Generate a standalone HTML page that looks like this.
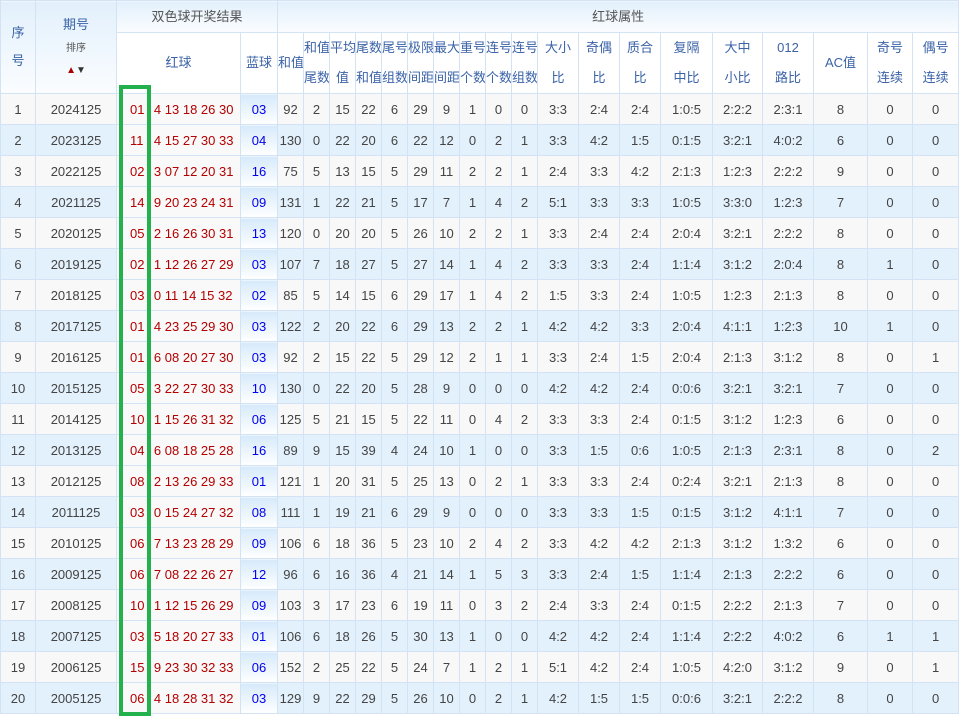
<!DOCTYPE html>
<html><head><meta charset="utf-8"><style>
body{margin:0;background:#fff;font-family:"Liberation Sans","Noto Sans CJK SC",sans-serif;}
table{position:absolute;left:0;top:0;border-collapse:collapse;table-layout:fixed;width:958px;font-size:13px;}
td,th{border:1px solid #d3e3f3;text-align:center;padding:0;overflow:hidden;white-space:nowrap;}
th{font-weight:normal;color:#3b63a8;background:#fff;line-height:30px;font-size:13px;}
.g{background:linear-gradient(#e2f0fc,#fbfdff);}
.t{color:#555;}
tbody tr{height:31px;}
tbody td{color:#444;}
tbody tr:nth-child(odd){background:#f8f8f8;}
tbody tr:nth-child(even){background:#e3f1fc;}
td.r{background:#f9f9f9;position:relative;text-align:left;color:#b30000;}
td.r b{font-weight:normal;position:absolute;left:13px;top:8px;}
td.r i{font-style:normal;position:absolute;left:37px;right:0;top:8px;overflow:hidden;}
td.r i span{display:inline-block;margin-left:-7.3px;}
td.b{background:linear-gradient(#d6eafb,#ffffff);color:#0000ee;}
#box{position:absolute;left:119px;top:85px;width:24px;height:623px;border:4px solid #22b14c;}
</style></head><body>
<table>
<colgroup><col style="width:35px"><col style="width:81px"><col style="width:124px"><col style="width:37px"><col style="width:26px"><col style="width:26px"><col style="width:26px"><col style="width:26px"><col style="width:26px"><col style="width:26px"><col style="width:26px"><col style="width:26px"><col style="width:26px"><col style="width:26px"><col style="width:41px"><col style="width:41px"><col style="width:41px"><col style="width:52px"><col style="width:50px"><col style="width:51px"><col style="width:54px"><col style="width:45px"><col style="width:46px"></colgroup>
<thead>
<tr style="height:32px"><th rowspan="2" class="g" style="line-height:28px">序<br>号</th><th rowspan="2" class="g" style="line-height:22px">期号<br><span style="font-size:10px;color:#555;line-height:12px">排序<br><span style="color:#a00">▲</span><span style="color:#333">▼</span></span></th><th colspan="2" class="g t">双色球开奖结果</th><th colspan="19" class="g t">红球属性</th></tr>
<tr style="height:61px"><th>红球</th><th>蓝球</th><th>和值</th><th>和值<br>尾数</th><th>平均<br>值</th><th>尾数<br>和值</th><th>尾号<br>组数</th><th>极限<br>间距</th><th>最大<br>间距</th><th>重号<br>个数</th><th>连号<br>个数</th><th>连号<br>组数</th><th>大小<br>比</th><th>奇偶<br>比</th><th>质合<br>比</th><th>复隔<br>中比</th><th>大中<br>小比</th><th>012<br>路比</th><th>AC值</th><th>奇号<br>连续</th><th>偶号<br>连续</th></tr>
</thead>
<tbody>
<tr><td>1</td><td>2024125</td><td class="r"><b>01</b><i><span>04 13 18 26 30</span></i></td><td class="b">03</td><td>92</td><td>2</td><td>15</td><td>22</td><td>6</td><td>29</td><td>9</td><td>1</td><td>0</td><td>0</td><td>3:3</td><td>2:4</td><td>2:4</td><td>1:0:5</td><td>2:2:2</td><td>2:3:1</td><td>8</td><td>0</td><td>0</td></tr>
<tr><td>2</td><td>2023125</td><td class="r"><b>11</b><i><span>04 15 27 30 33</span></i></td><td class="b">04</td><td>130</td><td>0</td><td>22</td><td>20</td><td>6</td><td>22</td><td>12</td><td>0</td><td>2</td><td>1</td><td>3:3</td><td>4:2</td><td>1:5</td><td>0:1:5</td><td>3:2:1</td><td>4:0:2</td><td>6</td><td>0</td><td>0</td></tr>
<tr><td>3</td><td>2022125</td><td class="r"><b>02</b><i><span>03 07 12 20 31</span></i></td><td class="b">16</td><td>75</td><td>5</td><td>13</td><td>15</td><td>5</td><td>29</td><td>11</td><td>2</td><td>2</td><td>1</td><td>2:4</td><td>3:3</td><td>4:2</td><td>2:1:3</td><td>1:2:3</td><td>2:2:2</td><td>9</td><td>0</td><td>0</td></tr>
<tr><td>4</td><td>2021125</td><td class="r"><b>14</b><i><span>09 20 23 24 31</span></i></td><td class="b">09</td><td>131</td><td>1</td><td>22</td><td>21</td><td>5</td><td>17</td><td>7</td><td>1</td><td>4</td><td>2</td><td>5:1</td><td>3:3</td><td>3:3</td><td>1:0:5</td><td>3:3:0</td><td>1:2:3</td><td>7</td><td>0</td><td>0</td></tr>
<tr><td>5</td><td>2020125</td><td class="r"><b>05</b><i><span>02 16 26 30 31</span></i></td><td class="b">13</td><td>120</td><td>0</td><td>20</td><td>20</td><td>5</td><td>26</td><td>10</td><td>2</td><td>2</td><td>1</td><td>3:3</td><td>2:4</td><td>2:4</td><td>2:0:4</td><td>3:2:1</td><td>2:2:2</td><td>8</td><td>0</td><td>0</td></tr>
<tr><td>6</td><td>2019125</td><td class="r"><b>02</b><i><span>01 12 26 27 29</span></i></td><td class="b">03</td><td>107</td><td>7</td><td>18</td><td>27</td><td>5</td><td>27</td><td>14</td><td>1</td><td>4</td><td>2</td><td>3:3</td><td>3:3</td><td>2:4</td><td>1:1:4</td><td>3:1:2</td><td>2:0:4</td><td>8</td><td>1</td><td>0</td></tr>
<tr><td>7</td><td>2018125</td><td class="r"><b>03</b><i><span>10 11 14 15 32</span></i></td><td class="b">02</td><td>85</td><td>5</td><td>14</td><td>15</td><td>6</td><td>29</td><td>17</td><td>1</td><td>4</td><td>2</td><td>1:5</td><td>3:3</td><td>2:4</td><td>1:0:5</td><td>1:2:3</td><td>2:1:3</td><td>8</td><td>0</td><td>0</td></tr>
<tr><td>8</td><td>2017125</td><td class="r"><b>01</b><i><span>04 23 25 29 30</span></i></td><td class="b">03</td><td>122</td><td>2</td><td>20</td><td>22</td><td>6</td><td>29</td><td>13</td><td>2</td><td>2</td><td>1</td><td>4:2</td><td>4:2</td><td>3:3</td><td>2:0:4</td><td>4:1:1</td><td>1:2:3</td><td>10</td><td>1</td><td>0</td></tr>
<tr><td>9</td><td>2016125</td><td class="r"><b>01</b><i><span>06 08 20 27 30</span></i></td><td class="b">03</td><td>92</td><td>2</td><td>15</td><td>22</td><td>5</td><td>29</td><td>12</td><td>2</td><td>1</td><td>1</td><td>3:3</td><td>2:4</td><td>1:5</td><td>2:0:4</td><td>2:1:3</td><td>3:1:2</td><td>8</td><td>0</td><td>1</td></tr>
<tr><td>10</td><td>2015125</td><td class="r"><b>05</b><i><span>03 22 27 30 33</span></i></td><td class="b">10</td><td>130</td><td>0</td><td>22</td><td>20</td><td>5</td><td>28</td><td>9</td><td>0</td><td>0</td><td>0</td><td>4:2</td><td>4:2</td><td>2:4</td><td>0:0:6</td><td>3:2:1</td><td>3:2:1</td><td>7</td><td>0</td><td>0</td></tr>
<tr><td>11</td><td>2014125</td><td class="r"><b>10</b><i><span>01 15 26 31 32</span></i></td><td class="b">06</td><td>125</td><td>5</td><td>21</td><td>15</td><td>5</td><td>22</td><td>11</td><td>0</td><td>4</td><td>2</td><td>3:3</td><td>3:3</td><td>2:4</td><td>0:1:5</td><td>3:1:2</td><td>1:2:3</td><td>6</td><td>0</td><td>0</td></tr>
<tr><td>12</td><td>2013125</td><td class="r"><b>04</b><i><span>06 08 18 25 28</span></i></td><td class="b">16</td><td>89</td><td>9</td><td>15</td><td>39</td><td>4</td><td>24</td><td>10</td><td>1</td><td>0</td><td>0</td><td>3:3</td><td>1:5</td><td>0:6</td><td>1:0:5</td><td>2:1:3</td><td>2:3:1</td><td>8</td><td>0</td><td>2</td></tr>
<tr><td>13</td><td>2012125</td><td class="r"><b>08</b><i><span>02 13 26 29 33</span></i></td><td class="b">01</td><td>121</td><td>1</td><td>20</td><td>31</td><td>5</td><td>25</td><td>13</td><td>0</td><td>2</td><td>1</td><td>3:3</td><td>3:3</td><td>2:4</td><td>0:2:4</td><td>3:2:1</td><td>2:1:3</td><td>8</td><td>0</td><td>0</td></tr>
<tr><td>14</td><td>2011125</td><td class="r"><b>03</b><i><span>10 15 24 27 32</span></i></td><td class="b">08</td><td>111</td><td>1</td><td>19</td><td>21</td><td>6</td><td>29</td><td>9</td><td>0</td><td>0</td><td>0</td><td>3:3</td><td>3:3</td><td>1:5</td><td>0:1:5</td><td>3:1:2</td><td>4:1:1</td><td>7</td><td>0</td><td>0</td></tr>
<tr><td>15</td><td>2010125</td><td class="r"><b>06</b><i><span>07 13 23 28 29</span></i></td><td class="b">09</td><td>106</td><td>6</td><td>18</td><td>36</td><td>5</td><td>23</td><td>10</td><td>2</td><td>4</td><td>2</td><td>3:3</td><td>4:2</td><td>4:2</td><td>2:1:3</td><td>3:1:2</td><td>1:3:2</td><td>6</td><td>0</td><td>0</td></tr>
<tr><td>16</td><td>2009125</td><td class="r"><b>06</b><i><span>07 08 22 26 27</span></i></td><td class="b">12</td><td>96</td><td>6</td><td>16</td><td>36</td><td>4</td><td>21</td><td>14</td><td>1</td><td>5</td><td>3</td><td>3:3</td><td>2:4</td><td>1:5</td><td>1:1:4</td><td>2:1:3</td><td>2:2:2</td><td>6</td><td>0</td><td>0</td></tr>
<tr><td>17</td><td>2008125</td><td class="r"><b>10</b><i><span>01 12 15 26 29</span></i></td><td class="b">09</td><td>103</td><td>3</td><td>17</td><td>23</td><td>6</td><td>19</td><td>11</td><td>0</td><td>3</td><td>2</td><td>2:4</td><td>3:3</td><td>2:4</td><td>0:1:5</td><td>2:2:2</td><td>2:1:3</td><td>7</td><td>0</td><td>0</td></tr>
<tr><td>18</td><td>2007125</td><td class="r"><b>03</b><i><span>05 18 20 27 33</span></i></td><td class="b">01</td><td>106</td><td>6</td><td>18</td><td>26</td><td>5</td><td>30</td><td>13</td><td>1</td><td>0</td><td>0</td><td>4:2</td><td>4:2</td><td>2:4</td><td>1:1:4</td><td>2:2:2</td><td>4:0:2</td><td>6</td><td>1</td><td>1</td></tr>
<tr><td>19</td><td>2006125</td><td class="r"><b>15</b><i><span>09 23 30 32 33</span></i></td><td class="b">06</td><td>152</td><td>2</td><td>25</td><td>22</td><td>5</td><td>24</td><td>7</td><td>1</td><td>2</td><td>1</td><td>5:1</td><td>4:2</td><td>2:4</td><td>1:0:5</td><td>4:2:0</td><td>3:1:2</td><td>9</td><td>0</td><td>1</td></tr>
<tr><td>20</td><td>2005125</td><td class="r"><b>06</b><i><span>04 18 28 31 32</span></i></td><td class="b">03</td><td>129</td><td>9</td><td>22</td><td>29</td><td>5</td><td>26</td><td>10</td><td>0</td><td>2</td><td>1</td><td>4:2</td><td>1:5</td><td>1:5</td><td>0:0:6</td><td>3:2:1</td><td>2:2:2</td><td>8</td><td>0</td><td>0</td></tr>
</tbody></table>
<div id="box"></div>
</body></html>
